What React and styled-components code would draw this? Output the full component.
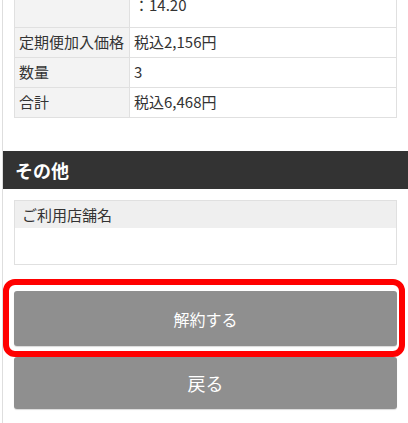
import styled, { createGlobalStyle } from "styled-components";

const GlobalStyle = createGlobalStyle`
  html, body {
    margin: 0;
    padding: 0;
    background: #fff;
    overflow: hidden;
  }
  body {
    font-family: "Noto Sans CJK JP", "Noto Sans", sans-serif;
    color: #333;
  }
`;

const Page = styled.div`
  padding-left: 2px;
  height: 423px;
  overflow: hidden;
`;

const Frame = styled.div`
  border-left: 1px solid #dedede;
  margin-top: -30px;
  padding-bottom: 40px;
`;

const Section = styled.div`
  padding: 0 11px;
`;

const Table = styled.table`
  width: 100%;
  border-collapse: collapse;
  font-size: 15px;
  line-height: 20px;
`;

const Th = styled.th`
  width: 106px;
  background: #f3f3f3;
  border: 1px solid #e0e0e0;
  font-weight: normal;
  text-align: left;
  padding: 4px 4px 5px;
  vertical-align: top;
  white-space: nowrap;
`;

const Td = styled.td`
  border: 1px solid #e0e0e0;
  padding: 4px 4px ${(p) => (p.$extra ? 12 : 5)}px;
  vertical-align: top;
  white-space: pre-line;
`;

const Heading = styled.h2`
  margin: 33px 0 11px;
  background: #333;
  color: #fff;
  font-size: 18px;
  font-weight: bold;
  line-height: 38px;
  height: 38px;
  padding: 0 12px;
`;

const StoreBox = styled.div`
  border: 1px solid #e0e0e0;
  height: 63px;
`;

const StoreLabel = styled.div`
  background: #efefef;
  font-size: 15px;
  line-height: 27px;
  padding: 0 7px;
`;

const Highlight = styled.div`
  margin: 14px -8px 0 -11px;
  border: 6px solid #ff0000;
  border-radius: 12px;
  padding: 6px 2px 5px 5px;
`;

const Button = styled.button`
  display: block;
  width: 100%;
  height: ${(p) => p.$h}px;
  border: none;
  border-radius: 3px;
  background: #8f8f8f;
  color: #fff;
  font-family: "Noto Sans CJK JP", "Noto Sans", sans-serif;
  font-size: ${(p) => p.$fs}px;
  box-shadow: 0 1px 1px rgba(0, 0, 0, 0.15);
  cursor: pointer;
`;

const Rows = [
  ["", "\n：14.20"],
  ["定期便加入価格", "税込2,156円"],
  ["数量", "3"],
  ["合計", "税込6,468円"],
];

export default function App() {
  return (
    <Page>
      <GlobalStyle />
      <Frame>
        <Section>
          <Table>
            <tbody>
              {Rows.map(([k, v], i) => (
                <tr key={i}>
                  <Th>{k}</Th>
                  <Td $extra={i === 0}>{v}</Td>
                </tr>
              ))}
            </tbody>
          </Table>
        </Section>
        <Heading>その他</Heading>
        <Section>
          <StoreBox>
            <StoreLabel>ご利用店舗名</StoreLabel>
          </StoreBox>
          <Highlight>
            <Button $h={55} $fs={16}>解約する</Button>
          </Highlight>
          <Button $h={52} $fs={18}>戻る</Button>
        </Section>
      </Frame>
    </Page>
  );
}
